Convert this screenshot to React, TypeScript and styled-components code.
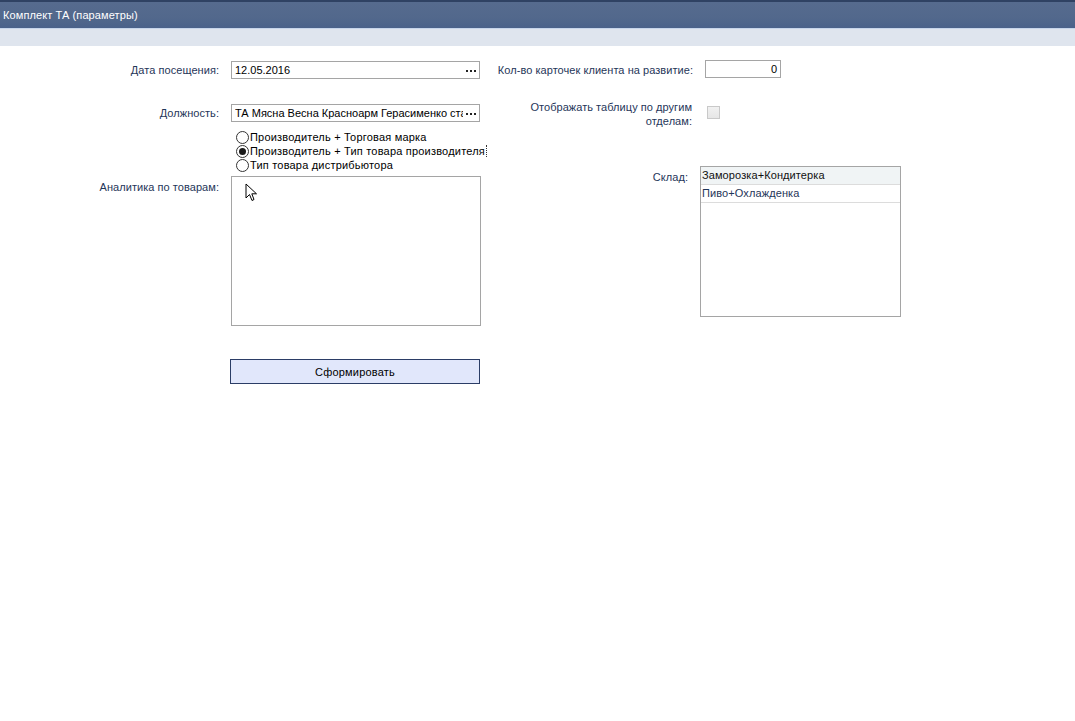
import React from "react";
import styled, { createGlobalStyle } from "styled-components";

const Global = createGlobalStyle`
  html, body { margin: 0; padding: 0; background: #ffffff; }
  body { font-family: "Liberation Sans", Arial, sans-serif; font-size: 11px; color: #000; }
  * { box-sizing: border-box; }
`;

const Page = styled.div`
  width: 1075px;
  height: 721px;
  background: #fff;
  position: relative;
  overflow: hidden;
`;

const TitleBar = styled.div`
  height: 29px;
  background: linear-gradient(#566b8e 0%, #52688c 60%, #4a628a 100%);
  border-top: 2px solid #2f4263;
  border-bottom: 1px solid #c6d5ea;
  color: #ffffff;
  display: flex;
  align-items: center;
  padding-left: 3px;
  font-size: 11px;
  letter-spacing: 0.1px;
`;

const Band = styled.div`
  height: 17px;
  background: #dfe5ee;
`;

const Body = styled.div`
  display: flex;
  align-items: flex-start;
`;

const LeftCol = styled.div`
  width: 490px;
  display: flex;
  flex-direction: column;
  padding-top: 15px;
`;

const RightCol = styled.div`
  width: 420px;
  display: flex;
  flex-direction: column;
  padding-top: 14px;
`;

const Row = styled.div<{ $labelW: number; $gap: number; $mt?: number }>`
  display: grid;
  grid-template-columns: ${(p) => p.$labelW}px auto;
  column-gap: ${(p) => p.$gap}px;
  align-items: start;
  margin-top: ${(p) => p.$mt ?? 0}px;
`;

const Label = styled.div<{ $pt?: number }>`
  text-align: right;
  color: #1f3659;
  line-height: 14px;
  padding-top: ${(p) => p.$pt ?? 2}px;
  white-space: nowrap;
  letter-spacing: 0.05px;
`;

const Edit = styled.div<{ $w: number; $align?: string }>`
  width: ${(p) => p.$w}px;
  height: 18px;
  border: 1px solid #a5a5a5;
  background: #fff;
  display: flex;
  align-items: center;
  padding: 0 3px 0 3px;
  overflow: hidden;
  justify-content: ${(p) => (p.$align === "right" ? "flex-end" : "flex-start")};
`;

const EditText = styled.span`
  flex: 1;
  min-width: 0;
  white-space: nowrap;
  overflow: hidden;
  letter-spacing: 0px;
`;

const Ellipsis = styled.span`
  position: relative;
  flex: none;
  width: 10px;
  height: 2px;
  margin-left: 3px;
  margin-top: 1px;
  &::before {
    content: "";
    position: absolute;
    left: 0;
    top: 0;
    width: 2px;
    height: 2px;
    background: #222;
    box-shadow: 4px 0 0 #222, 8px 0 0 #222;
  }
`;

const Radios = styled.div`
  display: flex;
  flex-direction: column;
  margin-left: 236px;
  margin-top: 8px;
`;

const RadioRow = styled.div`
  display: flex;
  align-items: center;
  height: 14px;
  white-space: nowrap;
`;

const RadioCircle = styled.span<{ $on?: boolean }>`
  width: 13px;
  height: 13px;
  border-radius: 50%;
  border: 1px solid #333;
  background: #fff;
  display: inline-flex;
  align-items: center;
  justify-content: center;
  margin-right: 1px;
  &::after {
    content: "";
    display: ${(p) => (p.$on ? "block" : "none")};
    width: 7px;
    height: 7px;
    border-radius: 50%;
    background: #1a1a1a;
  }
`;

const RadioText = styled.span<{ $focus?: boolean }>`
  padding-right: 1px;
  border-right: ${(p) => (p.$focus ? "1px dotted #333" : "1px solid transparent")};
  letter-spacing: 0.2px;
`;

const BigBox = styled.div`
  width: 250px;
  height: 150px;
  border: 1px solid #a5a5a5;
  background: #fff;
  position: relative;
`;

const Cursor = styled.svg`
  position: absolute;
  left: 13px;
  top: 6px;
`;

const Button = styled.button`
  margin-left: 230px;
  margin-top: 33px;
  width: 250px;
  height: 25px;
  background: #e1e7fb;
  border: 1px solid #2b3d66;
  font-family: "Liberation Sans", Arial, sans-serif;
  font-size: 11px;
  letter-spacing: 0.2px;
  color: #000;
  padding: 0;
`;

const Check = styled.span`
  width: 13px;
  height: 13px;
  margin-left: 2px;
  margin-top: 6px;
  border: 1px solid #c9c9c9;
  background: linear-gradient(#f1f1f1, #e6e6e6);
  display: block;
`;

const List = styled.div`
  width: 201px;
  height: 151px;
  border: 1px solid #a5a5a5;
  background: #fff;
`;

const ListItem = styled.div<{ $sel?: boolean }>`
  height: 18px;
  line-height: 17px;
  padding-left: 1px;
  border-bottom: 1px solid #dcdcdc;
  background: ${(p) => (p.$sel ? "#f0f4f5" : "#fff")};
  color: ${(p) => (p.$sel ? "#111" : "#1f3659")};
  white-space: nowrap;
  letter-spacing: 0.1px;
`;

export default function App() {
  return (
    <Page>
      <Global />
      <TitleBar>Комплект ТА (параметры)</TitleBar>
      <Band />
      <Body>
        <LeftCol>
          <Row $labelW={219} $gap={12}>
            <Label>Дата посещения:</Label>
            <Edit $w={249}>
              <EditText>12.05.2016</EditText>
              <Ellipsis />
            </Edit>
          </Row>
          <Row $labelW={219} $gap={12} $mt={25}>
            <Label>Должность:</Label>
            <Edit $w={249}>
              <EditText>ТА Мясна Весна Красноарм Герасименко стаж</EditText>
              <Ellipsis />
            </Edit>
          </Row>
          <Radios>
            <RadioRow>
              <RadioCircle />
              <RadioText>Производитель + Торговая марка</RadioText>
            </RadioRow>
            <RadioRow>
              <RadioCircle $on />
              <RadioText $focus>Производитель + Тип товара производителя</RadioText>
            </RadioRow>
            <RadioRow>
              <RadioCircle />
              <RadioText>Тип товара дистрибьютора</RadioText>
            </RadioRow>
          </Radios>
          <Row $labelW={219} $gap={12} $mt={4}>
            <Label $pt={4}>Аналитика по товарам:</Label>
            <BigBox>
              <Cursor width="14" height="20" viewBox="0 0 14 20">
                <path
                  d="M1 1 L1 15 L4.5 11.5 L7 17.5 L9 16.5 L6.8 10.8 L11.5 10.8 Z"
                  fill="#fff"
                  stroke="#000"
                  strokeWidth="1"
                  strokeLinejoin="miter"
                />
              </Cursor>
            </BigBox>
          </Row>
          <Button>Сформировать</Button>
        </LeftCol>
        <RightCol>
          <Row $labelW={203} $gap={12}>
            <Label $pt={3}>Кол-во карточек клиента на развитие:</Label>
            <Edit $w={76} $align="right">
              <span>0</span>
            </Edit>
          </Row>
          <Row $labelW={202} $gap={13} $mt={22}>
            <Label $pt={0}>
              Отображать таблицу по другим
              <br />
              отделам:
            </Label>
            <Check />
          </Row>
          <Row $labelW={198} $gap={12} $mt={38}>
            <Label $pt={4}>Склад:</Label>
            <List>
              <ListItem $sel>Заморозка+Кондитерка</ListItem>
              <ListItem>Пиво+Охлажденка</ListItem>
            </List>
          </Row>
        </RightCol>
      </Body>
    </Page>
  );
}
